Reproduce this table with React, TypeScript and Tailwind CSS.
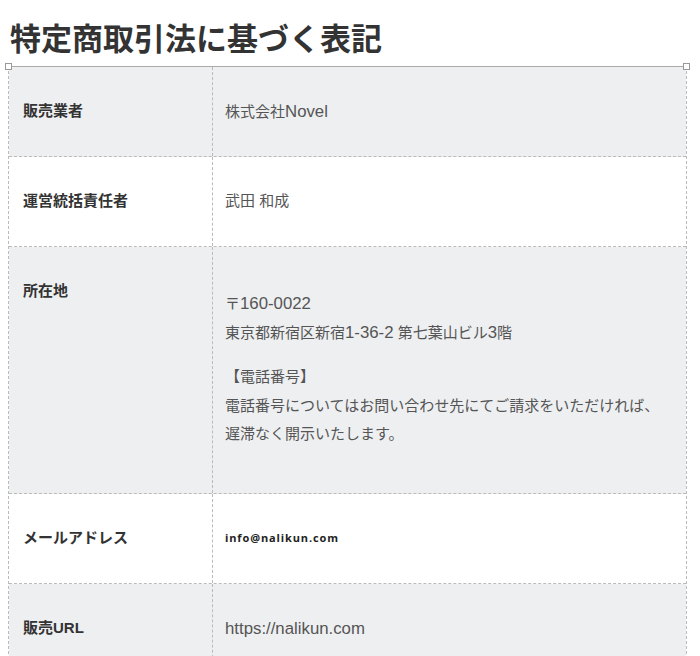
import { ReactNode } from "react";

// Latin runs in the reference are drawn a bit wider than the CJK text around them
const L = ({ children }: { children: ReactNode }) => (
  <span className="text-[16.8px]">{children}</span>
);

const rows = [
  { label: "販売業者", value: <>株式会社<L>Novel</L></>, gray: true },
  { label: "運営統括責任者", value: <>武田 和成</>, gray: false },
  { label: "所在地", value: null, gray: true },
  { label: "メールアドレス", value: "info@nalikun.com", gray: false, email: true },
  { label: "販売URL", value: <L>https://nalikun.com</L>, gray: true },
];

const Address = () => (
  <div className="h-[246px] pt-[43px] text-[15px] leading-[28.5px] text-[#555]">
    <p>〒<L>160-0022</L></p>
    <p>
      東京都新宿区新宿<L>1-36-2</L> 第七葉山ビル<L>3</L>階
    </p>
    <p className="mt-[16px]">【電話番号】</p>
    <p>電話番号についてはお問い合わせ先にてご請求をいただければ、</p>
    <p>遅滞なく開示いたします。</p>
  </div>
);

export default function App() {
  return (
    <div className="min-h-[656px] bg-white font-['Liberation_Sans','Noto_Sans_CJK_JP',sans-serif] text-[#333]">
      <h1 className="pl-[10px] pt-[17px] font-['Noto_Sans_CJK_JP',sans-serif] text-[31px] font-bold leading-[40px] text-[#333]">
        特定商取引法に基づく表記
      </h1>

      <div className="relative mt-[9px] ml-[8px] w-[679px] border-t border-l border-r border-t-[#aaa] border-l-[#bbb] border-r-[#bbb] border-dashed [border-top-style:solid]">
        <span className="absolute -top-[4px] -left-[4px] h-[7px] w-[7px] border border-[#999] bg-white" />
        <span className="absolute -top-[4px] -right-[4px] h-[7px] w-[7px] border border-[#999] bg-white" />

        {rows.map((r) => (
          <div
            key={r.label}
            className={`grid grid-cols-[204px_1fr] border-b border-dashed border-[#bbb] ${r.gray ? "bg-[#eeeff1]" : "bg-white"}`}
          >
            {r.value === null ? (
              <>
                <div className="border-r border-dashed border-[#bbb] px-[14px] pt-[32px] text-[15px] font-bold leading-[24px] text-[#333]">
                  {r.label}
                </div>
                <div className="px-[12px]">
                  <Address />
                </div>
              </>
            ) : (
              <>
                <div className="flex h-[89px] items-center border-r border-dashed border-[#bbb] px-[14px] text-[15px] font-bold text-[#333]">
                  {r.label}
                </div>
                <div className="flex h-[89px] items-center px-[12px]">
                  {r.email ? (
                    <span className="font-['Open_Sans',sans-serif] text-[11px] font-bold tracking-[0.08em] text-[#222]">
                      {r.value}
                    </span>
                  ) : (
                    <span className="text-[15px] text-[#555]">{r.value}</span>
                  )}
                </div>
              </>
            )}
          </div>
        ))}
      </div>
    </div>
  );
}
